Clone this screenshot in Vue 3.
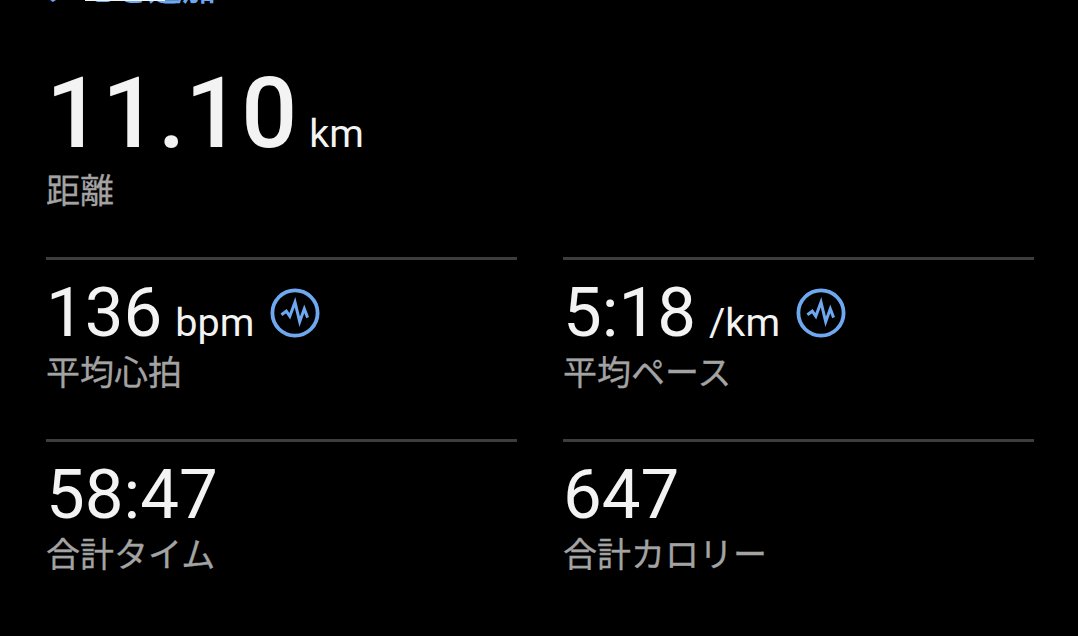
<template>
    <div class="screen">
        <div class="note-link">
            <span>メモを追加</span>
            <div class="tab-indicator"></div>
        </div>

        <div class="distance">
            <div class="distance-value">
                <span class="number">11.10</span>
                <span class="unit">km</span>
            </div>
            <div class="label">距離</div>
        </div>

        <div class="stats-grid">
            <div v-for="stat in stats" :key="stat.label" class="stat">
                <div class="stat-value">
                    <span class="number">{{ stat.value }}</span>
                    <span v-if="stat.unit" class="unit">{{ stat.unit }}</span>
                    <svg v-if="stat.chart" class="pulse" viewBox="0 0 50 50">
                        <circle cx="25" cy="25" r="22.6" />
                        <path d="M11.4 26.8L16.3 23.2L19.8 28.2L25 14.2L29.7 33.8L34.3 20.8L37.6 29.6" />
                    </svg>
                </div>
                <div class="label">{{ stat.label }}</div>
            </div>
        </div>
    </div>
</template>


<script setup>

import { ref } from "vue";

const stats = ref([
    { value: "136", unit: "bpm", label: "平均心拍", chart: true },
    { value: "5:18", unit: "/km", label: "平均ペース", chart: true },
    { value: "58:47", label: "合計タイム" },
    { value: "647", label: "合計カロリー" },
]);
</script>


<style>
body {
    margin: 0;
    background: #000;
}
</style>

<style scoped>
.screen {
    box-sizing: border-box;
    width: 1078px;
    height: 636px;
    padding: 0 44px 0 46px;
    overflow: hidden;
    background: #000;
    color: #f3f3f3;
    font-family: Roboto, "Noto Sans CJK JP", sans-serif;
}

/* scrolled almost out of view */
.note-link {
    position: relative;
    display: flex;
    align-items: flex-end;
    height: 7px;
    color: #6ea8f0;
    font-family: "Noto Sans CJK JP", sans-serif;
    font-size: 34px;
    font-weight: 500;
    line-height: 40px;
}

.tab-indicator {
    position: absolute;
    top: 0;
    left: 39px;
    width: 80px;
    height: 1px;
    background: #f3f3f3;
}

.distance {
    box-sizing: border-box;
    height: 250px;
    padding-top: 57px;
}

.distance-value {
    display: flex;
    align-items: baseline;
    height: 100px;
    margin-bottom: 7px;
    line-height: 100px;
}

.distance-value .number {
    font-size: 98.5px;
    font-weight: 500;
}

.distance-value .unit {
    margin-left: 12px;
}

.unit {
    font-size: 39.5px;
}

.label {
    color: #a3a3a3;
    font-family: "Noto Sans CJK JP", sans-serif;
    font-size: 34px;
    line-height: 36px;
    white-space: nowrap;
    -webkit-text-stroke: 0.3px #a3a3a3;
}

.stats-grid {
    display: grid;
    grid-template-columns: 471px 471px;
    grid-auto-rows: 182px;
    column-gap: 46px;
}

.stat {
    box-sizing: border-box;
    padding-top: 13px;
    border-top: 3px solid #3d3d3d;
    height: 182px;
}

.stat-value {
    display: flex;
    align-items: baseline;
    height: 80px;
    line-height: 80px;
}

.stat-value .number {
    font-size: 69px;
}

.stat-value .unit {
    margin-left: 13px;
}

.pulse {
    align-self: flex-start;
    width: 50px;
    height: 50px;
    margin: 15px 0 0 16px;
    fill: none;
    stroke: #6ea8f0;
    stroke-width: 3;
}

.pulse circle {
    stroke-width: 3.8;
}
</style>
